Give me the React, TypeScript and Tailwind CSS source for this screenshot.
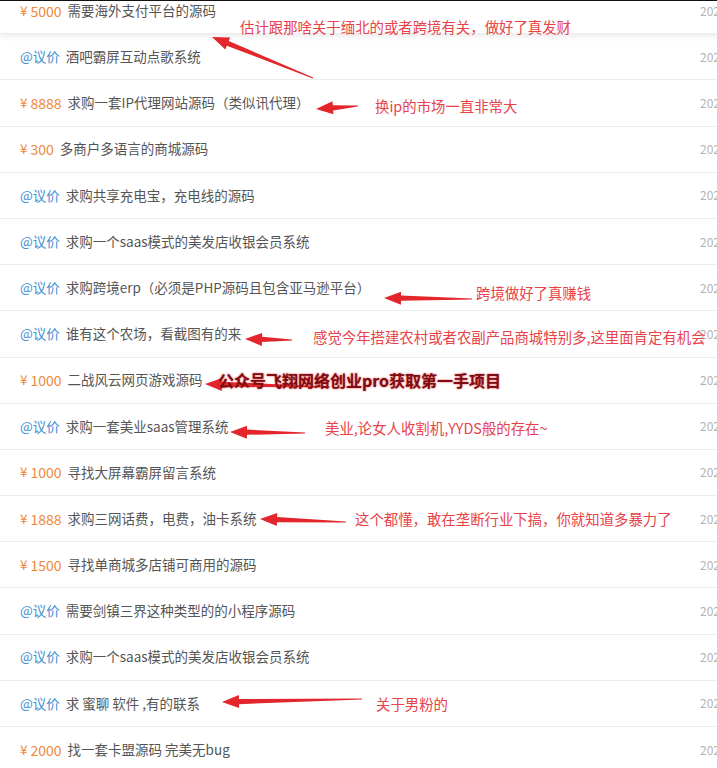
import React from "react";

// Một dòng yêu cầu: giá (hoặc null = 议价) và tiêu đề
type Row = { price: string | null; title: string };

const rows: Row[] = [
  { price: "5000", title: "需要海外支付平台的源码" },
  { price: null, title: "酒吧霸屏互动点歌系统" },
  { price: "8888", title: "求购一套IP代理网站源码（类似讯代理）" },
  { price: "300", title: "多商户多语言的商城源码" },
  { price: null, title: "求购共享充电宝，充电线的源码" },
  { price: null, title: "求购一个saas模式的美发店收银会员系统" },
  { price: null, title: "求购跨境erp（必须是PHP源码且包含亚马逊平台）" },
  { price: null, title: "谁有这个农场，看截图有的来" },
  { price: "1000", title: "二战风云网页游戏源码" },
  { price: null, title: "求购一套美业saas管理系统" },
  { price: "1000", title: "寻找大屏幕霸屏留言系统" },
  { price: "1888", title: "求购三网话费，电费，油卡系统" },
  { price: "1500", title: "寻找单商城多店铺可商用的源码" },
  { price: null, title: "需要剑镇三界这种类型的的小程序源码" },
  { price: null, title: "求购一个saas模式的美发店收银会员系统" },
  { price: null, title: "求 蜜聊 软件 ,有的联系" },
  { price: "2000", title: "找一套卡盟源码 完美无bug" },
];

// Mũi tên đỏ thon dần: đuôi mảnh, đầu to
const arrows: [number, number, number, number][] = [
  [313, 77, 212, 36],
  [358, 105, 316, 108],
  [472, 298, 384, 297],
  [292, 339, 245, 338],
  [330, 386, 205, 383],
  [305, 432, 230, 431],
  [346, 521, 260, 518],
  [362, 698, 222, 701],
];

const arrowPoints = (x1: number, y1: number, x2: number, y2: number) => {
  const len = Math.hypot(x2 - x1, y2 - y1);
  const dx = (x2 - x1) / len;
  const dy = (y2 - y1) / len;
  const nx = -dy;
  const ny = dx;
  const head = 17;
  const bx = x2 - dx * head;
  const by = y2 - dy * head;
  const p = (x: number, y: number, w: number) =>
    `${(x + nx * w).toFixed(1)},${(y + ny * w).toFixed(1)}`;
  return [
    p(x1, y1, 0.4),
    p(bx, by, 2.6),
    p(bx, by, 6.5),
    p(x2, y2, 0),
    p(bx, by, -6.5),
    p(bx, by, -2.6),
    p(x1, y1, -0.4),
  ].join(" ");
};

const App = () => {
  return (
    <div
      className="relative w-[717px] h-[768px] overflow-hidden bg-white border-t border-[#111]"
      style={{ fontFamily: '"Noto Sans CJK SC", "Liberation Sans", sans-serif' }}
    >
      {/* Danh sách */}
      <div className="-mt-[13px] w-[800px]">
        {rows.map((row, i) => (
          <div
            key={i}
            className={`flex items-center h-[46.2px] pl-5 border-b border-[#ededed] bg-white ${
              i === 0 ? "relative z-10 shadow-[0_3px_6px_rgba(0,0,0,0.07)]" : ""
            }`}
          >
            <div className="w-[680px] flex items-center gap-[6px] text-[13.5px] leading-none">
              {row.price ? (
                <span className="text-[#f0883c] flex gap-[3px]">
                  <span>¥</span>
                  <span className="text-[14px]">{row.price}</span>
                </span>
              ) : (
                <span className="text-[#3f8fd2]">@议价</span>
              )}
              <span className="text-[#555]">{row.title}</span>
            </div>
            <span className="text-[12px] text-[#b3b3b3] whitespace-nowrap">2021-06-18</span>
          </div>
        ))}
      </div>

      {/* Mũi tên chú thích */}
      <svg className="absolute left-0 top-0 z-20 pointer-events-none" width="717" height="768">
        {arrows.map(([x1, y1, x2, y2], i) => (
          <polygon key={i} points={arrowPoints(x1, y1, x2, y2)} fill="#e3262b" />
        ))}
      </svg>

      {/* Chữ chú thích */}
      <div className="absolute inset-0 z-20 text-[14.4px] leading-[18px] text-[#e8424a] whitespace-nowrap">
        <span className="absolute left-[240px] top-[17px]">估计跟那啥关于缅北的或者跨境有关，做好了真发财</span>
        <span className="absolute left-[375px] top-[96px]">换ip的市场一直非常大</span>
        <span className="absolute left-[476px] top-[283px]">跨境做好了真赚钱</span>
        <span className="absolute left-[313px] top-[327px]">感觉今年搭建农村或者农副产品商城特别多,这里面肯定有机会</span>
        <span className="absolute left-[325px] top-[418px]">美业,论女人收割机,YYDS般的存在~</span>
        <span className="absolute left-[355px] top-[509px]">这个都懂，敢在垄断行业下搞，你就知道多暴力了</span>
        <span className="absolute left-[376px] top-[694px]">关于男粉的</span>
        <span className="absolute left-[218px] top-[370px] font-bold text-[16px] text-[#7d0d12] [text-shadow:0_0_2px_rgba(230,40,40,0.9)]">
          公众号飞翔网络创业pro获取第一手项目
        </span>
      </div>
    </div>
  );
};

export default App;
